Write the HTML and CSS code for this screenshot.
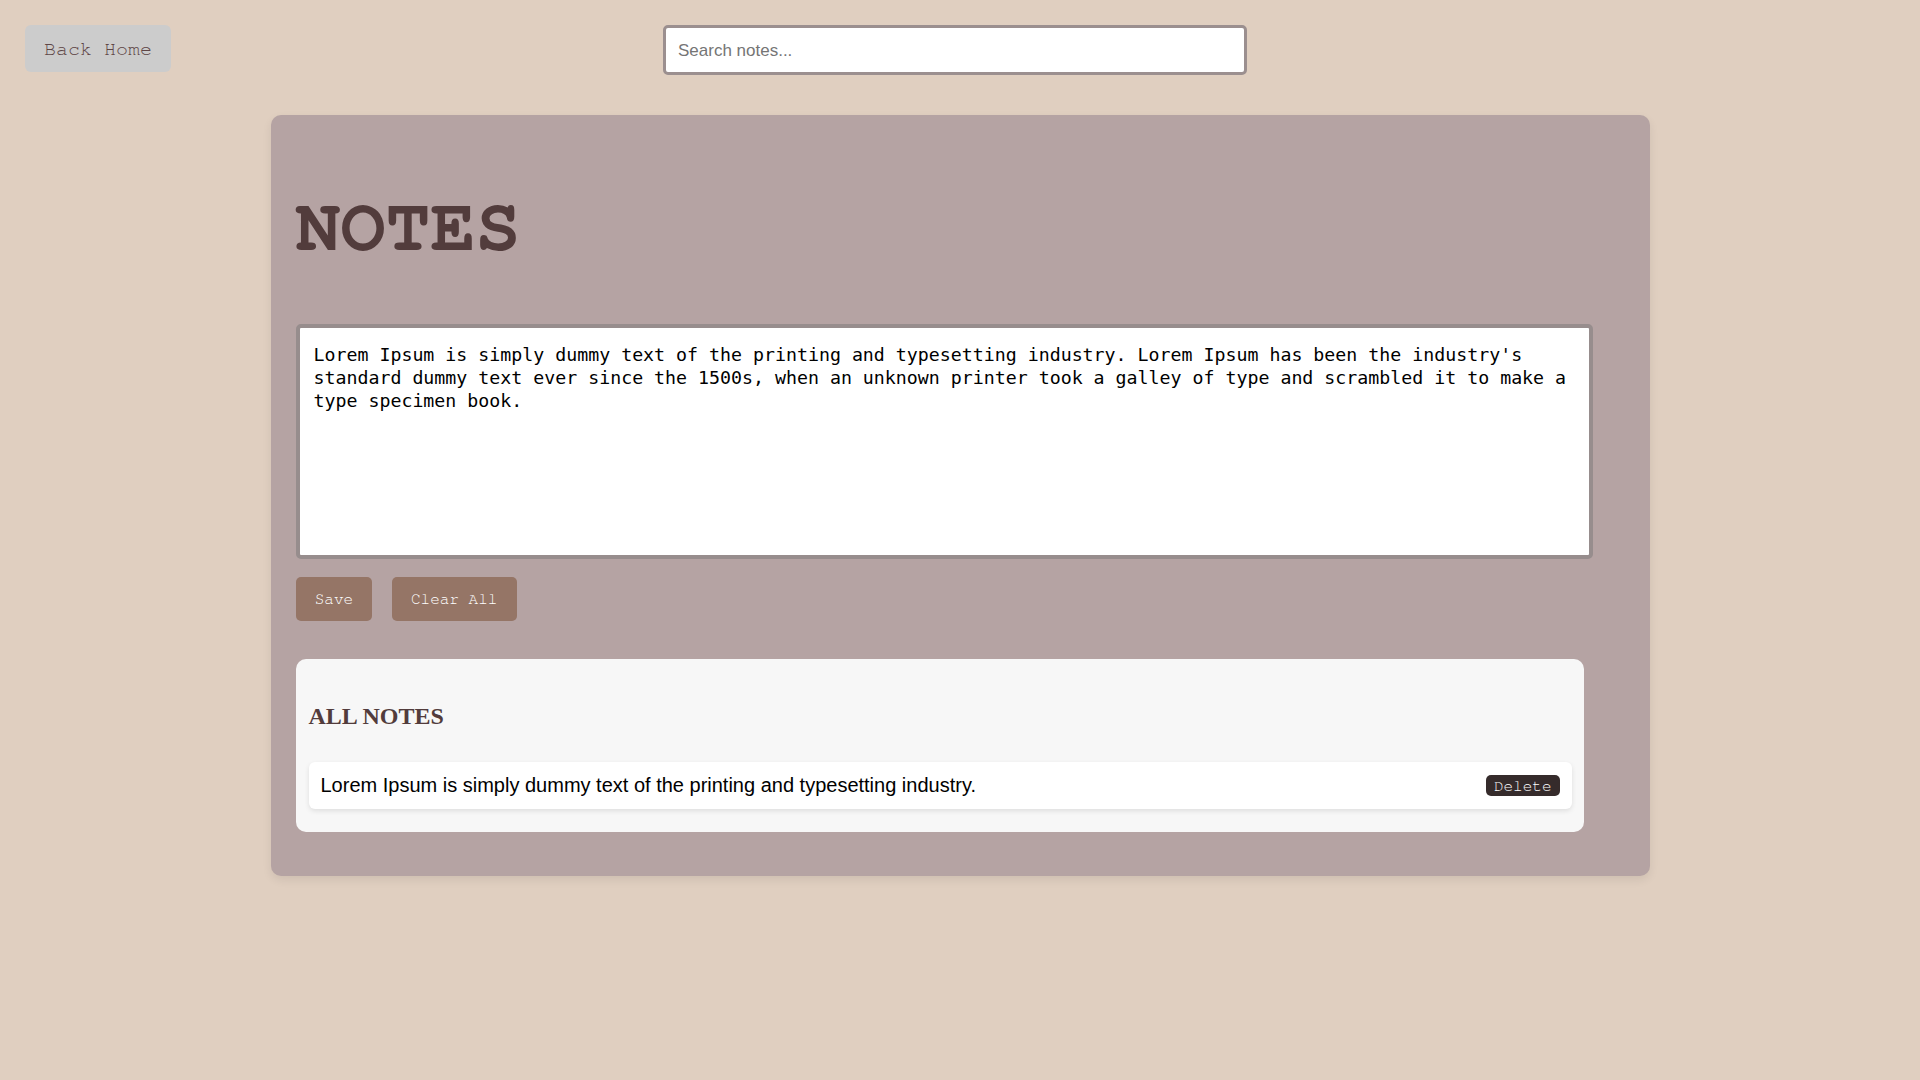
FILE: index.html
```html
<!DOCTYPE html>
<html lang="en">
<head>
<meta charset="UTF-8">
<title>Notes</title>
<link rel="stylesheet" href="styles.css">
</head>
<body>
<header class="topbar">
  <button class="back-btn">Back Home</button>
  <input class="search" type="text" placeholder="Search notes...">
</header>
<main class="notes-card">
  <h1 class="title">NOTES</h1>
  <textarea class="editor">Lorem Ipsum is simply dummy text of the printing and typesetting industry. Lorem Ipsum has been the industry's standard dummy text ever since the 1500s, when an unknown printer took a galley of type and scrambled it to make a type specimen book.</textarea>
  <div class="actions">
    <button class="action-btn">Save</button>
    <button class="action-btn">Clear All</button>
  </div>
  <section class="list-card">
    <h2 class="list-title">ALL NOTES</h2>
    <div class="note-item">
      <span class="note-text">Lorem Ipsum is simply dummy text of the printing and typesetting industry.</span>
      <button class="delete-btn">Delete</button>
    </div>
  </section>
</main>
</body>
</html>
```
FILE: styles.css
```css
* { box-sizing: border-box; }

body {
  margin: 0;
  min-height: 100vh;
  background: #e0cfc0;
  font-family: "Liberation Sans", Arial, sans-serif;
}

.topbar {
  display: flex;
  align-items: flex-start;
  padding: 25px 0 0 25px;
}

.back-btn {
  font-family: "Nimbus Mono PS", "FreeMono", "Courier", "Courier New", "Liberation Mono", monospace;
  font-size: 20px;
  line-height: 22px;
  color: #5e4646;
  background: #cccccc;
  border: none;
  border-radius: 6px;
  padding: 12.5px 19px;
}

.search {
  margin-left: 492px;
  width: 584px;
  height: 50px;
  border: 3px solid #9b8f8f;
  border-radius: 5px;
  padding: 1px 12px 0;
  font-size: 17px;
  font-family: "Liberation Sans", Arial, sans-serif;
  background: #fff;
  outline: none;
}

.search::placeholder { color: #757575; }

.notes-card {
  width: 1379px;
  margin: 40px auto 0;
  background: #b5a3a3;
  border-radius: 10px;
  padding: 25px 25px 44px;
  box-shadow: 0 4px 10px rgba(0, 0, 0, 0.08);
}

.title {
  font-family: "Nimbus Mono PS", "FreeMono", "Courier", "Courier New", "Liberation Mono", monospace;
  font-weight: bold;
  font-size: 75px;
  line-height: normal;
  color: #523c3c;
  margin: 50px 0 59px;
}

.editor {
  display: block;
  width: 1297px;
  height: 235px;
  border: 4px solid #978d8d;
  border-radius: 5px;
  padding: 14.5px 14px 12px;
  font-family: "DejaVu Sans Mono", monospace;
  font-size: 18.25px;
  line-height: 23.3px;
  color: #000;
  background: #fff;
  resize: none;
  outline: none;
}

.actions {
  display: flex;
  gap: 19.5px;
  margin-top: 18px;
}

.action-btn {
  font-family: "Nimbus Mono PS", "FreeMono", "Courier", "Courier New", "Liberation Mono", monospace;
  font-size: 16px;
  line-height: 18px;
  color: #fff;
  background: #957566;
  border: none;
  border-radius: 5px;
  padding: 13px 19.2px;
}

.list-card {
  width: 1288px;
  margin-top: 38px;
  background: #f7f7f7;
  border-radius: 10px;
  padding: 13px 12px 22.5px 13px;
}

.list-title {
  font-family: "Liberation Serif", "Times New Roman", serif;
  font-weight: bold;
  font-size: 24px;
  line-height: normal;
  color: #523c3c;
  margin: 31px 0 32px;
}

.note-item {
  display: flex;
  align-items: center;
  justify-content: space-between;
  height: 47px;
  padding: 0 12px;
  background: #fff;
  border-radius: 6px;
  box-shadow: 0 2px 5px rgba(0, 0, 0, 0.1);
}

.note-text {
  font-size: 20px;
  color: #000;
}

.delete-btn {
  font-family: "Nimbus Mono PS", "FreeMono", "Courier", "Courier New", "Liberation Mono", monospace;
  font-size: 16px;
  line-height: 18px;
  color: #fff;
  background: #352b2b;
  border: none;
  border-radius: 5px;
  padding: 1.5px 8px;
}
```
